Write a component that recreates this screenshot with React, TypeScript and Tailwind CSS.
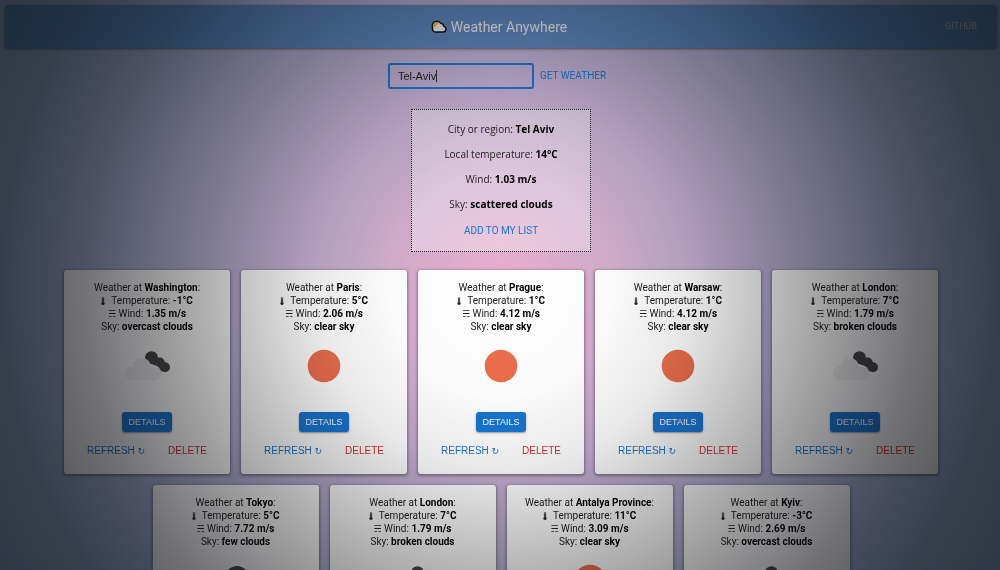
import { useState } from "react";

type Sky = "clear sky" | "few clouds" | "broken clouds" | "overcast clouds";

interface CityWeather {
  city: string;
  temperature: number;
  wind: string;
  sky: Sky;
}

const cities: CityWeather[] = [
  { city: "Washington", temperature: -1, wind: "1.35", sky: "overcast clouds" },
  { city: "Paris", temperature: 5, wind: "2.06", sky: "clear sky" },
  { city: "Prague", temperature: 1, wind: "4.12", sky: "clear sky" },
  { city: "Warsaw", temperature: 1, wind: "4.12", sky: "clear sky" },
  { city: "London", temperature: 7, wind: "1.79", sky: "broken clouds" },
  { city: "Tokyo", temperature: 5, wind: "7.72", sky: "few clouds" },
  { city: "London", temperature: 7, wind: "1.79", sky: "broken clouds" },
  { city: "Antalya Province", temperature: 11, wind: "3.09", sky: "clear sky" },
  { city: "Kyiv", temperature: -3, wind: "2.69", sky: "overcast clouds" },
];

function LogoIcon() {
  return (
    <svg viewBox="0 0 16 14" className="h-[14px] w-4" aria-hidden="true">
      <path
        d="M1.600 8.200C.6 4.600 2.200 1.500 5.200 1.200c2-.2 3.600.5 4.600 2 2 .2 3 1.500 3 3.100 1.700.6 2.300 1.900 2.100 3.300-.2 1.500-1.300 2.400-2.900 2.400H4.200C2.200 12 1.200 10.300 1.600 8.200z"
        fill="#f4f4f4"
        stroke="#141414"
        strokeWidth="1.500"
      />
      <path d="M2.400 7.500C1.700 4.500 3 2.300 5.300 2c1.300-.1 2.300.2 3.100 1C6.300 3.400 5.300 4.600 5.200 6.200 3.900 6.300 3 6.700 2.400 7.500z" fill="#f6b51e" />
    </svg>
  );
}

function ThermometerIcon() {
  return (
    <svg viewBox="0 0 4 8" className="mr-1 inline-block h-2 w-1 align-[-1px]" aria-hidden="true">
      <path d="M1.200 1a.8.8 0 0 1 1.600 0v4.200a1.500 1.500 0 1 1-1.600 0z" fill="#6a6464" stroke="#444" strokeWidth=".4" />
      <path d="M1.600 2h.8v3.400a1.100 1.100 0 1 1-.8 0z" fill="#2a2222" />
    </svg>
  );
}

function SkyIcon({ sky }: { sky: Sky }) {
  return (
    <svg viewBox="0 0 66 66" className="size-[66px]" role="img" aria-label={sky}>
      {sky === "clear sky" && <circle cx="33" cy="33" r="16.300" fill="#ec6e4c" />}
      {sky === "few clouds" && <circle cx="34" cy="30" r="12" fill="#484848" />}
      {(sky === "broken clouds" || sky === "overcast clouds") && (
        <g fill="#484848">
          <circle cx="37.500" cy="24.700" r="6.500" />
          <circle cx="45.700" cy="29.500" r="5" />
          <circle cx="51" cy="34.200" r="5" />
          <path d="M35 28l6-5 11 9-5 7z" />
        </g>
      )}
      {sky !== "clear sky" && (
        <>
          <g fill="#fff">
            <circle cx="28" cy="34" r="9" />
            <circle cx="39" cy="40" r="8" />
          </g>
          <g fill="#f2f2f2">
            <circle cx="27.500" cy="33.500" r="8.500" />
            <circle cx="18" cy="40.500" r="7" />
            <circle cx="41" cy="41" r="6.500" />
            <path d="M18 34h23v13.500H18z" />
          </g>
        </>
      )}
    </svg>
  );
}

function WeatherCard({ city, temperature, wind, sky }: CityWeather) {
  return (
    <article className="flex w-[166px] flex-col items-center rounded-[3px] bg-white pt-[11px] pb-[17px] text-[10px] leading-[13px] text-[#222] shadow-[0_1px_3px_1px_rgba(0,0,0,0.35)]">
      <div className="text-center">
        <p>
          Weather at <b className="text-black">{city}</b>:
        </p>
        <p>
          <ThermometerIcon /> Temperature: <b className="text-black">{temperature}°C</b>
        </p>
        <p>
          <span className="font-['DejaVu_Sans',sans-serif] text-[9px] leading-none">☴</span> Wind:{" "}
          <b className="text-black">{wind} m/s</b>
        </p>
        <p>
          Sky: <b className="text-black">{sky}</b>
        </p>
      </div>
      <SkyIcon sky={sky} />
      <button type="button" className="mt-[13px] h-5 w-[50px] rounded-[3px] bg-[#1976d2] font-['Liberation_Sans',Arial,sans-serif] text-[9px] text-white shadow-[0_1px_2px_rgba(0,0,0,0.4)]">
        DETAILS
      </button>
      <div className="mt-3 flex h-[13px] w-full items-center justify-between px-[23px] font-['Liberation_Sans',Arial,sans-serif]">
        <button type="button" className="h-[13px] text-[#1976d2]">
          REFRESH <span className="font-['DejaVu_Sans',sans-serif] text-[9px] leading-none">↻</span>
        </button>
        <button type="button" className="h-[13px] text-[#d32f2f]">DELETE</button>
      </div>
    </article>
  );
}

export default function App() {
  const [query, setQuery] = useState("Tel-Aviv");

  return (
    <div className="min-h-screen pt-[5px] pr-[3px] pl-[5px] font-[Roboto,Arial,sans-serif]">
      <div className="fixed inset-0 -z-10 bg-[radial-gradient(circle,rgb(236,174,204)_0%,rgb(196,174,208)_32%,rgb(150,180,222)_100%)]" />

      <header className="grid h-[43px] grid-cols-[1fr_auto_1fr] items-center rounded-[3px] bg-[#1f6cb0]/60 px-5 text-[#eee] shadow-[0_1px_3px_rgba(0,0,0,0.5)]">
        <h1 className="col-start-2 flex items-center gap-1 pr-1 text-[14px] leading-5">
          <LogoIcon />
          Weather Anywhere
        </h1>
        <a href="#github" className="justify-self-end text-[9px] text-[#ccc]">GITHUB</a>
      </header>

      <main>
        <form
          className="mt-[15px] flex items-center justify-center gap-[6px] pr-2"
          onSubmit={(event) => event.preventDefault()}
        >
          <div className="relative">
            <input
              aria-label="City"
              value={query}
              onChange={(event) => setQuery(event.target.value)}
              className="block h-[26px] w-[146px] rounded-[3px] border-2 border-[#1976d2] bg-transparent px-2 font-['Liberation_Sans',Arial,sans-serif] text-[11px] text-[#222] outline-none"
            />
            <span className="absolute top-[7px] left-12 h-3 w-px bg-[#333]" />
          </div>
          <button type="submit" className="text-[10px] leading-4 text-[#1976d2]">GET WEATHER</button>
        </form>

        <section className="mx-auto mt-5 flex w-[180px] flex-col items-center border border-dotted border-[#222] bg-white/35 pt-[7px] pb-3 font-['Open_Sans','Noto_Sans',sans-serif] text-[10px] leading-[25px] text-[#222]">
          <p>City or region: <b className="text-black">Tel Aviv</b></p>
          <p>Local temperature: <b className="text-black">14°C</b></p>
          <p>Wind: <b className="text-black">1.03 m/s</b></p>
          <p>Sky: <b className="text-black">scattered clouds</b></p>
          <button type="button" className="mt-[6px] font-[Roboto,Arial,sans-serif] leading-4 text-[#1976d2]">
            ADD TO MY LIST
          </button>
        </section>

        <section aria-label="My list" className="mx-auto mt-[18px] flex max-w-[900px] flex-wrap justify-center gap-[11px]">
          {cities.map((entry, index) => (
            <WeatherCard key={index} {...entry} />
          ))}
        </section>
      </main>

      <div className="pointer-events-none fixed inset-0 bg-[radial-gradient(circle,transparent_0px,rgba(8,9,12,0.02)_110px,rgba(8,9,12,0.09)_185px,rgba(8,9,12,0.3)_285px,rgba(8,9,12,0.58)_420px,rgba(8,9,12,0.69)_500px,rgba(8,9,12,0.73)_575px)]" />
    </div>
  );
}
